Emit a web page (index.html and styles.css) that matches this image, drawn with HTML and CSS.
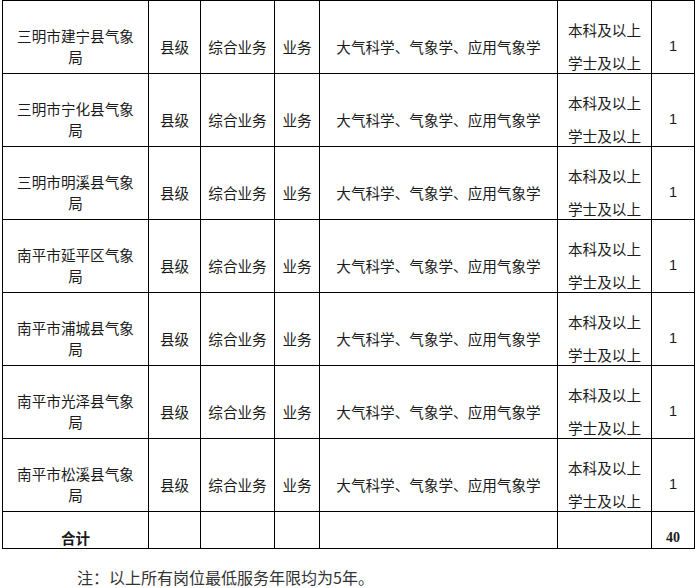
FILE: index.html
```html
<!DOCTYPE html>
<html lang="zh-CN">
<head>
<meta charset="utf-8">
<title>岗位表</title>
<link rel="stylesheet" href="styles.css">
</head>
<body>
<table class="jobs">
  <colgroup>
    <col class="c-unit"><col class="c-level"><col class="c-post"><col class="c-type"><col class="c-major"><col class="c-edu"><col class="c-num">
  </colgroup>
  <tbody>
    <tr class="row">
      <td class="unit">三明市建宁县气象<br>局</td><td>县级</td><td>综合业务</td><td>业务</td><td>大气科学、气象学、应用气象学</td>
      <td class="edu"><div>本科及以上</div><div class="deg">学士及以上</div></td><td class="num">1</td>
    </tr>
    <tr class="row">
      <td class="unit">三明市宁化县气象<br>局</td><td>县级</td><td>综合业务</td><td>业务</td><td>大气科学、气象学、应用气象学</td>
      <td class="edu"><div>本科及以上</div><div class="deg">学士及以上</div></td><td class="num">1</td>
    </tr>
    <tr class="row">
      <td class="unit">三明市明溪县气象<br>局</td><td>县级</td><td>综合业务</td><td>业务</td><td>大气科学、气象学、应用气象学</td>
      <td class="edu"><div>本科及以上</div><div class="deg">学士及以上</div></td><td class="num">1</td>
    </tr>
    <tr class="row">
      <td class="unit">南平市延平区气象<br>局</td><td>县级</td><td>综合业务</td><td>业务</td><td>大气科学、气象学、应用气象学</td>
      <td class="edu"><div>本科及以上</div><div class="deg">学士及以上</div></td><td class="num">1</td>
    </tr>
    <tr class="row">
      <td class="unit">南平市浦城县气象<br>局</td><td>县级</td><td>综合业务</td><td>业务</td><td>大气科学、气象学、应用气象学</td>
      <td class="edu"><div>本科及以上</div><div class="deg">学士及以上</div></td><td class="num">1</td>
    </tr>
    <tr class="row">
      <td class="unit">南平市光泽县气象<br>局</td><td>县级</td><td>综合业务</td><td>业务</td><td>大气科学、气象学、应用气象学</td>
      <td class="edu"><div>本科及以上</div><div class="deg">学士及以上</div></td><td class="num">1</td>
    </tr>
    <tr class="row">
      <td class="unit">南平市松溪县气象<br>局</td><td>县级</td><td>综合业务</td><td>业务</td><td>大气科学、气象学、应用气象学</td>
      <td class="edu"><div>本科及以上</div><div class="deg">学士及以上</div></td><td class="num">1</td>
    </tr>
    <tr class="total">
      <td class="sum-label">合计</td><td></td><td></td><td></td><td></td><td></td><td class="sum-num">40</td>
    </tr>
  </tbody>
</table>
<p class="note">注：以上所有岗位最低服务年限均为5年。</p>
</body>
</html>
```
FILE: styles.css
```css
html, body {
  margin: 0;
  padding: 0;
  background: #fff;
}
body {
  font-family: "Noto Sans CJK SC", "Noto Sans", sans-serif;
  color: #1a1a1a;
}
.jobs {
  border-collapse: collapse;
  table-layout: fixed;
  width: 692px;
  margin-left: 2px;
  font-size: 14.6px;
  line-height: 21px;
}
.c-unit { width: 146px; }
.c-level { width: 52px; }
.c-post { width: 74px; }
.c-type { width: 45px; }
.c-major { width: 238px; }
.c-edu { width: 94px; }
.c-num { width: 43px; }
.jobs td {
  border: 1px solid #000;
  text-align: center;
  vertical-align: middle;
  padding: 18px 0 0;
  white-space: nowrap;
}
.row td {
  height: 54px;
}
.edu .deg {
  margin-top: 12px;
}
.num {
  font-family: "Liberation Sans", "DejaVu Sans", sans-serif;
}
.total td {
  height: 20px;
  padding-top: 16px;
  line-height: 20px;
}
.sum-label {
  font-weight: bold;
}
.sum-num {
  font-family: "Liberation Serif", serif;
  font-weight: bold;
  font-size: 14px;
}
.note {
  margin: 18px 0 0;
  padding-left: 77px;
  font-size: 16px;
  line-height: 20px;
  color: #333;
}
```
